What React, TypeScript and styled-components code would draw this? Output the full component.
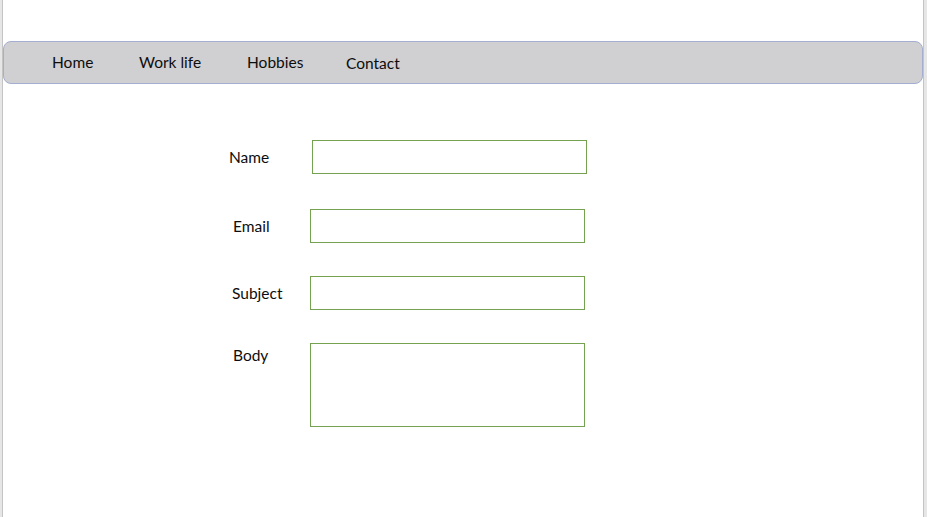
import React from 'react';
import styled, { createGlobalStyle } from 'styled-components';

const GlobalStyle = createGlobalStyle`
  html, body {
    margin: 0;
    padding: 0;
    background: #e6e6e6;
    font-family: Lato, "Open Sans", "Liberation Sans", sans-serif;
    color: #0d0d0d;
  }
`;

const Page = styled.div`
  box-sizing: border-box;
  width: 922px;
  height: 517px;
  margin-left: 2px;
  background: #fff;
  border-left: 1px solid #c4c4c4;
  border-right: 1px solid #c4c4c4;
  padding-top: 41px;
`;

const NavBar = styled.nav`
  box-sizing: border-box;
  height: 43px;
  display: flex;
  align-items: center;
  padding: 0 0 2px 48px;
  background: #d0cfd1;
  border: 1px solid #a3aed0;
  border-radius: 8px;
`;

const NavItem = styled.a<{ $width?: number; $drop?: number }>`
  width: ${(p) => (p.$width ? `${p.$width}px` : 'auto')};
  font-size: 15.5px;
  color: #0d0d0d;
  text-decoration: none;
  cursor: pointer;
  margin-top: ${(p) => p.$drop ?? 0}px;
`;

const Form = styled.form`
  display: flex;
  flex-direction: column;
  gap: 33px;
  margin-top: 56px;
  padding-left: 226px;
`;

const Row = styled.div<{ $top?: boolean; $extra?: number }>`
  display: flex;
  align-items: ${(p) => (p.$top ? 'flex-start' : 'center')};
  margin-bottom: ${(p) => p.$extra ?? 0}px;
`;

const Label = styled.label<{ $shift?: number; $top?: boolean }>`
  width: 81px;
  padding-left: ${(p) => p.$shift ?? 4}px;
  box-sizing: border-box;
  font-size: 15.5px;
  padding-top: ${(p) => (p.$top ? 3 : 0)}px;
`;

const Field = styled.input<{ $nudge?: number }>`
  box-sizing: border-box;
  width: 275px;
  height: 34px;
  margin: 0 0 0 ${(p) => p.$nudge ?? 0}px;
  border: 1px solid #75a250;
  background: #fff;
  outline: none;
  font: inherit;
`;

const BodyField = styled.textarea`
  box-sizing: border-box;
  width: 275px;
  height: 84px;
  margin: 0;
  border: 1px solid #75a250;
  background: #fff;
  outline: none;
  resize: none;
  font: inherit;
  display: block;
`;

export default function App() {
  return (
    <>
      <GlobalStyle />
      <Page>
        <NavBar>
          <NavItem $width={87}>Home</NavItem>
          <NavItem $width={108}>Work life</NavItem>
          <NavItem $width={99}>Hobbies</NavItem>
          <NavItem $drop={2}>Contact</NavItem>
        </NavBar>

        <Form onSubmit={(e) => e.preventDefault()}>
          <Row $extra={2}>
            <Label $shift={0}>Name</Label>
            <Field $nudge={2} />
          </Row>
          <Row>
            <Label>Email</Label>
            <Field />
          </Row>
          <Row>
            <Label $shift={3}>Subject</Label>
            <Field />
          </Row>
          <Row $top>
            <Label $top>Body</Label>
            <BodyField />
          </Row>
        </Form>
      </Page>
    </>
  );
}
